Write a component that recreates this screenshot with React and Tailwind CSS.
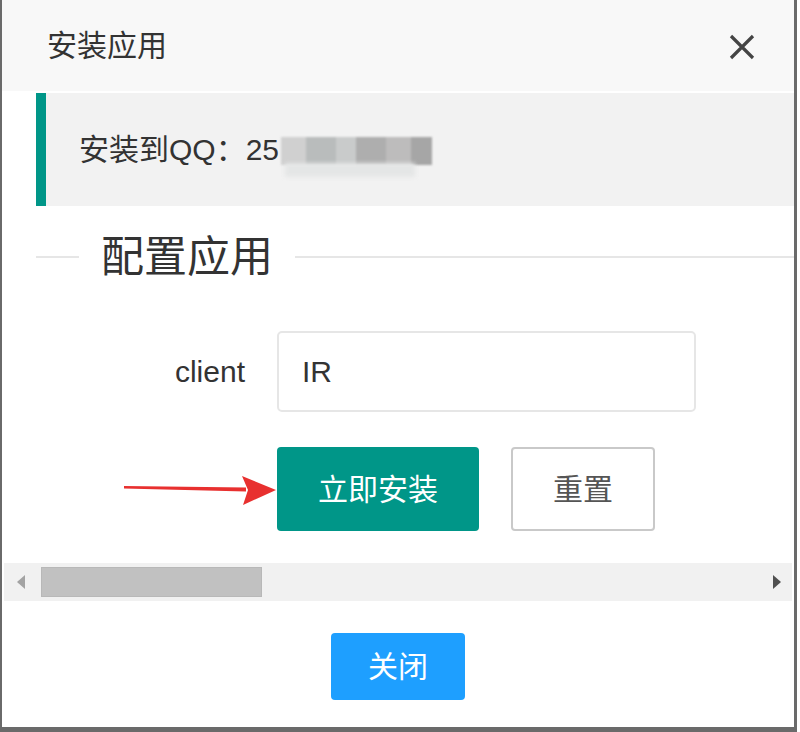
import React from 'react';

const FONT = "font-['Liberation_Sans','Noto_Sans_CJK_SC',sans-serif]";

const Redacted = () => (
  <span className="relative inline-block w-[151px] h-[30px] align-middle ml-[2px]">
    <span className="absolute left-0 top-[2px] w-[151px] h-[28px] flex blur-[1px]">
      <span className="w-[25px] h-full bg-[#d0d0d0]" />
      <span className="w-[30px] h-full bg-[#b9bcbc]" />
      <span className="w-[20px] h-full bg-[#c9cbcb]" />
      <span className="w-[30px] h-full bg-[#aeaeae]" />
      <span className="w-[25px] h-full bg-[#bdbcbc]" />
      <span className="w-[21px] h-full bg-[#a6a6a6]" />
    </span>
    <span className="absolute left-[4px] top-[28px] w-[130px] h-[14px] bg-[#e4e6e6] blur-[2px]" />
  </span>
);

export default function App() {
  return (
    <div className={`w-[800px] h-[732px] bg-white ${FONT} text-[#333]`}>
      <div className="w-[797px] h-[732px] flex flex-col border-l-2 border-r-[3px] border-b-[5px] border-[#6a6a6a] bg-white">
        {/* header */}
        <div className="h-[91px] shrink-0 bg-[#f8f8f8] flex items-center justify-between pl-[45px] pr-[38px]">
          <span className="text-[30px] leading-none">安装应用</span>
          <svg width="28" height="26" viewBox="0 0 28 26" className="mt-[3px]">
            <path d="M3 2 L25 24 M25 2 L3 24" stroke="#444" strokeWidth="3.2" strokeLinecap="butt" />
          </svg>
        </div>

        {/* content (scrollable frame) */}
        <div className="flex-1 flex flex-col overflow-hidden">
          <div className="ml-[34px] mt-[2px] h-[113px] shrink-0 bg-[#f2f2f2] border-l-[10px] border-[#009688] flex items-center pl-[33px]">
            <span className="text-[30px] leading-none">安装到QQ：25</span>
            <Redacted />
          </div>

          <div className="mt-[25px] h-[52px] shrink-0 flex items-center">
            <div className="ml-[34px] w-[43px] h-[2px] bg-[#e6e6e6]" />
            <span className="px-[22px] text-[43px] leading-none text-[#333]">配置应用</span>
            <div className="flex-1 h-[2px] bg-[#e6e6e6]" />
          </div>

          <div className="mt-[48px] flex items-center shrink-0">
            <div className="w-[243px] text-right text-[30px] leading-none">client</div>
            <div className="ml-[32px] w-[419px] h-[81px] border-2 border-[#e6e6e6] rounded-[5px] flex items-center pl-[23px] text-[30px]">
              IR
            </div>
          </div>

          <div className="relative mt-[35px] flex items-center shrink-0 pl-[275px] gap-[32px]">
            <svg className="absolute left-[120px] top-[28px]" width="156" height="32" viewBox="0 0 156 32">
              <path d="M2 11 L124 12.5 L124 16.5 L2 13.5 Z" fill="#e8302f" />
              <path d="M120 1 L154 15 L121 30 L126 15 Z" fill="#e8302f" />
            </svg>
            <div className="w-[202px] h-[84px] bg-[#009688] rounded-[4px] flex items-center justify-center text-white text-[30px]">
              立即安装
            </div>
            <div className="w-[144px] h-[84px] bg-white border-2 border-[#c9c9c9] rounded-[4px] flex items-center justify-center text-[#555] text-[30px]">
              重置
            </div>
          </div>

          {/* horizontal scrollbar */}
          <div className="mt-[32px] ml-[2px] mr-[2px] h-[38px] shrink-0 bg-[#f1f1f1] flex items-center">
            <svg className="ml-[12px]" width="10" height="16" viewBox="0 0 10 16">
              <path d="M9 1 L1 8 L9 15 Z" fill="#a3a3a3" />
            </svg>
            <div className="ml-[15px] w-[221px] h-[30px] bg-[#c1c1c1] border border-[#b8b8b8]" />
            <div className="flex-1" />
            <svg className="mr-[10px]" width="10" height="16" viewBox="0 0 10 16">
              <path d="M1 1 L9 8 L1 15 Z" fill="#505050" />
            </svg>
          </div>

          {/* footer */}
          <div className="flex-1 flex justify-center pt-[32px]">
            <div className="w-[134px] h-[67px] bg-[#1e9fff] rounded-[4px] flex items-center justify-center text-white text-[30px]">
              关闭
            </div>
          </div>
        </div>
      </div>
    </div>
  );
}
